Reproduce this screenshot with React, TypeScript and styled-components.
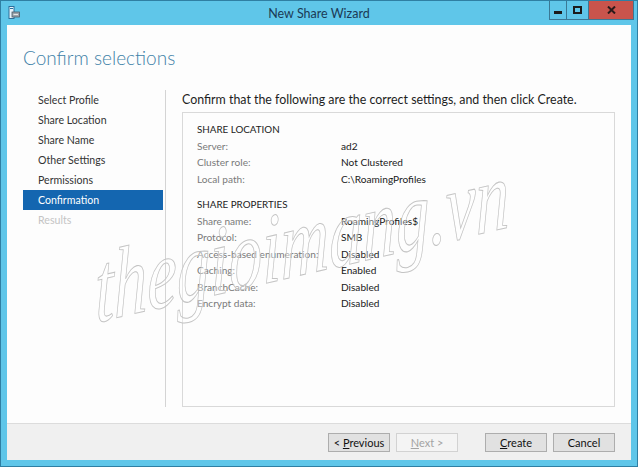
import React from 'react';
import styled, { createGlobalStyle } from 'styled-components';

const GlobalStyle = createGlobalStyle`
  html, body {
    margin: 0;
    padding: 0;
    background: #5fc6e9;
  }
  body {
    font-family: Lato, 'Open Sans', sans-serif;
  }
  * {
    box-sizing: border-box;
  }
`;

// Шаги мастера слева.
const steps = [
  { name: 'Select Profile' },
  { name: 'Share Location' },
  { name: 'Share Name' },
  { name: 'Other Settings' },
  { name: 'Permissions' },
  { name: 'Confirmation', active: true },
  { name: 'Results', disabled: true },
];

const sections = [
  {
    title: 'SHARE LOCATION',
    rows: [
      ['Server:', 'ad2'],
      ['Cluster role:', 'Not Clustered'],
      ['Local path:', 'C:\\RoamingProfiles'],
    ],
  },
  {
    title: 'SHARE PROPERTIES',
    rows: [
      ['Share name:', 'RoamingProfiles$'],
      ['Protocol:', 'SMB'],
      ['Access-based enumeration:', 'Disabled'],
      ['Caching:', 'Enabled'],
      ['BranchCache:', 'Disabled'],
      ['Encrypt data:', 'Disabled'],
    ],
  },
];

const Window = styled.div`
  position: relative;
  width: 638px;
  height: 467px;
  background: #5fc6e9;
  border: 1px solid #2f7fa3;
  display: flex;
  flex-direction: column;
  overflow: hidden;
`;

const TitleBar = styled.div`
  height: 24px;
  display: grid;
  grid-template-columns: 1fr auto 1fr;
  align-items: start;
`;

const AppIcon = styled.div`
  padding: 5px 0 0 7px;
  display: flex;
`;

const Title = styled.div`
  padding-top: 4px;
  font-size: 12.5px;
  line-height: 17px;
  color: #1b3a56;
`;

const Controls = styled.div`
  justify-self: end;
  display: flex;
  margin-right: 3px;
`;

const CtlButton = styled.div<{ $close?: boolean; $w: number }>`
  width: ${({ $w }) => $w}px;
  height: 19px;
  display: flex;
  align-items: center;
  justify-content: center;
  background: ${({ $close }) => ($close ? '#c9544c' : 'transparent')};
  border: 1px solid #3a7895;
  border-top: none;
  margin-left: -1px;
`;

const Client = styled.div`
  flex: 1;
  margin: 0 6px 6px 6px;
  background: #fdfdfd;
  display: flex;
  flex-direction: column;
`;

const Heading = styled.h1`
  margin: 0;
  padding: 19px 0 0 16px;
  height: 65px;
  font-size: 19px;
  line-height: 27px;
  font-weight: 300;
  color: #3f82a8;
`;

const Body = styled.div`
  flex: 1;
  display: flex;
  padding: 0 16px 0 16px;
  margin-bottom: 16px;
`;

const Nav = styled.ul`
  list-style: none;
  margin: 0;
  padding: 0 2px 0 0;
  width: 143px;
  border-right: 1px solid #d4d4d4;
`;

const NavItem = styled.li<{ $active?: boolean; $disabled?: boolean }>`
  height: 20px;
  line-height: 20px;
  padding-left: 15px;
  font-size: 10.6px;
  background: ${({ $active }) => ($active ? '#1466b0' : 'transparent')};
  color: ${({ $active, $disabled }) => ($active ? '#ffffff' : $disabled ? '#c4c4c4' : '#333333')};
`;

const Content = styled.div`
  flex: 1;
  display: flex;
  flex-direction: column;
  padding-left: 16px;
`;

const Instruction = styled.div`
  height: 22px;
  line-height: 20px;
  font-size: 12.4px;
  color: #1e1e1e;
`;

const SummaryBox = styled.div`
  flex: 1;
  border: 1px solid #d9d9d9;
  padding: 8px 14px;
`;

const Section = styled.div`
  & + & {
    margin-top: 9px;
  }
`;

const SectionTitle = styled.div`
  font-size: 9.8px;
  line-height: 16.5px;
  color: #222222;
`;

const Row = styled.div`
  display: grid;
  grid-template-columns: 144px 1fr;
  font-size: 10.1px;
  line-height: 16.5px;
`;

const Label = styled.span`
  color: #7a7a7a;
`;

const Value = styled.span`
  color: #1a1a1a;
`;

const Footer = styled.div`
  height: 37px;
  border-top: 1px solid #dcdcdc;
  background: #f0f0f0;
  display: flex;
  justify-content: flex-end;
  align-items: flex-start;
  padding: 9px 16px 0 0;
  gap: 6px;
`;

const Button = styled.button<{ $disabled?: boolean; $gap?: boolean }>`
  width: 62px;
  height: 19px;
  padding: 0;
  margin-left: ${({ $gap }) => ($gap ? '21px' : '0')};
  font-family: Lato, 'Open Sans', sans-serif;
  font-size: 11px;
  line-height: 17px;
  border: 1px solid ${({ $disabled }) => ($disabled ? '#d2d2d2' : '#adadad')};
  background: ${({ $disabled }) => ($disabled ? '#f4f4f4' : '#e1e1e1')};
  color: ${({ $disabled }) => ($disabled ? '#a3a3a3' : '#111111')};

  u {
    text-decoration-thickness: 1px;
    text-underline-offset: 1px;
  }
`;

const Watermark = styled.div`
  position: absolute;
  left: 95px;
  top: 240px;
  font-family: 'Liberation Serif', serif;
  font-style: italic;
  font-size: 98px;
  line-height: 1;
  color: rgba(255, 255, 255, 0.35);
  -webkit-text-stroke: 1px #c4c4c4;
  transform: rotate(-13deg) skewX(-12deg) scaleX(0.7);
  transform-origin: left bottom;
  pointer-events: none;
  white-space: nowrap;
`;

function ServerIcon() {
  return (
    <svg width="12" height="13" viewBox="0 0 12 13">
      <rect x="1" y="0.5" width="5" height="12" fill="#e8f4fb" stroke="#2d6f9a" />
      <rect x="2" y="2" width="3" height="1" fill="#2d6f9a" />
      <rect x="4" y="6" width="7.5" height="5" fill="#9aa3ab" stroke="#4c5a66" strokeWidth="0.8" />
      <rect x="5.5" y="8" width="4.5" height="1" fill="#e6e6e6" />
    </svg>
  );
}

export default function App() {
  return (
    <>
      <GlobalStyle />
      <Window>
        <TitleBar>
          <AppIcon>
            <ServerIcon />
          </AppIcon>
          <Title>New Share Wizard</Title>
          <Controls>
            <CtlButton $w={18}>
              <svg width="8" height="8" viewBox="0 0 8 8">
                <rect x="0" y="5" width="8" height="3" fill="#1c1c1c" />
              </svg>
            </CtlButton>
            <CtlButton $w={23}>
              <svg width="9" height="8" viewBox="0 0 9 8">
                <rect x="1" y="1" width="7" height="6" fill="none" stroke="#1c1c1c" strokeWidth="2" />
              </svg>
            </CtlButton>
            <CtlButton $w={46} $close>
              <svg width="9" height="8" viewBox="0 0 9 8">
                <path d="M1 0.5 L8 7.5 M8 0.5 L1 7.5" stroke="#2a1a1a" strokeWidth="2" />
              </svg>
            </CtlButton>
          </Controls>
        </TitleBar>

        <Client>
          <Heading>Confirm selections</Heading>
          <Body>
            <Nav>
              {steps.map((step) => (
                <NavItem key={step.name} $active={step.active} $disabled={step.disabled}>
                  {step.name}
                </NavItem>
              ))}
            </Nav>
            <Content>
              <Instruction>Confirm that the following are the correct settings, and then click Create.</Instruction>
              <SummaryBox>
                {sections.map((section) => (
                  <Section key={section.title}>
                    <SectionTitle>{section.title}</SectionTitle>
                    {section.rows.map(([label, value]) => (
                      <Row key={label}>
                        <Label>{label}</Label>
                        <Value>{value}</Value>
                      </Row>
                    ))}
                  </Section>
                ))}
              </SummaryBox>
            </Content>
          </Body>
          <Footer>
            <Button>
              &lt; <u>P</u>revious
            </Button>
            <Button $disabled>
              <u>N</u>ext &gt;
            </Button>
            <Button $gap>
              <u>C</u>reate
            </Button>
            <Button>Cancel</Button>
          </Footer>
        </Client>

        <Watermark>thegioimang.vn</Watermark>
      </Window>
    </>
  );
}
